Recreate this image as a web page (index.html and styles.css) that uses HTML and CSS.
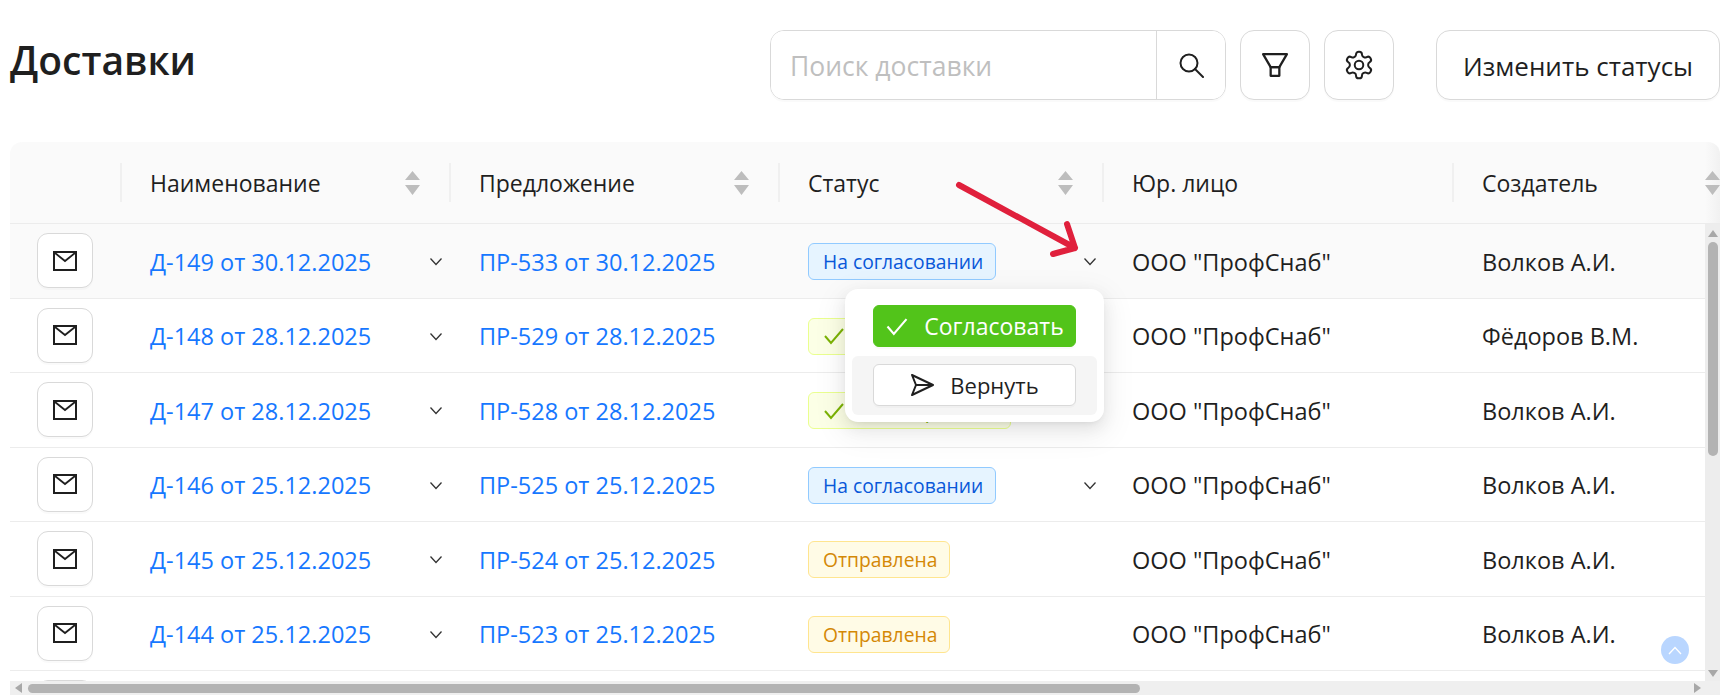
FILE: index.html
```html
<!DOCTYPE html>
<html lang="ru">
  <head>
    <meta charset="UTF-8" />
    <title>Доставки</title>
    <link rel="stylesheet" href="styles.css">
  </head>
  <body>
    <div class="page-head">
      <h1 class="page-title">Доставки</h1>
      <div class="search">
        <input class="search-input" type="text" placeholder="Поиск доставки">
        <button class="search-btn">
          <svg width="26" height="26" viewBox="0 0 26 26" fill="none" stroke="#1f1f1f" stroke-width="2"><circle cx="11" cy="11" r="8.5"/><path d="M17 17l8 8" stroke-linecap="round"/></svg>
        </button>
      </div>
      <button class="icon-btn btn-filter">
        <svg width="26" height="26" viewBox="0 0 24 24" fill="none" stroke="#1f1f1f" stroke-width="2.1" stroke-linejoin="round"><path d="M1 2h22l-7 12H8z"/><path d="M8 14h8v8H8z"/></svg>
      </button>
      <button class="icon-btn btn-settings">
        <svg width="32" height="32" viewBox="0 0 24 24" fill="none" stroke="#1f1f1f" stroke-width="1.5" stroke-linejoin="round"><path d="M12.22 2h-.44a2 2 0 0 0-2 2v.18a2 2 0 0 1-1 1.73l-.43.25a2 2 0 0 1-2 0l-.15-.08a2 2 0 0 0-2.73.73l-.22.38a2 2 0 0 0 .73 2.73l.15.1a2 2 0 0 1 1 1.72v.51a2 2 0 0 1-1 1.74l-.15.09a2 2 0 0 0-.73 2.73l.22.38a2 2 0 0 0 2.73.73l.15-.08a2 2 0 0 1 2 0l.43.25a2 2 0 0 1 1 1.73V20a2 2 0 0 0 2 2h.44a2 2 0 0 0 2-2v-.18a2 2 0 0 1 1-1.73l.43-.25a2 2 0 0 1 2 0l.15.08a2 2 0 0 0 2.73-.73l.22-.39a2 2 0 0 0-.73-2.73l-.15-.08a2 2 0 0 1-1-1.74v-.5a2 2 0 0 1 1-1.74l.15-.09a2 2 0 0 0 .73-2.73l-.22-.38a2 2 0 0 0-2.73-.73l-.15.08a2 2 0 0 1-2 0l-.43-.25a2 2 0 0 1-1-1.73V4a2 2 0 0 0-2-2z"/><circle cx="12" cy="12" r="3.2"/></svg>
      </button>
      <button class="change-btn">Изменить статусы</button>
    </div>

    <div class="table-card">
      <!-- Шапка -->
      <div class="grid-row table-head">
        <div></div>
        <div class="th">Наименование <svg class="sort" width="15" height="24" viewBox="0 0 15 24"><path d="M7.5 0L15 9H0zM7.5 24L0 14h15z"/></svg></div>
        <div class="th">Предложение <svg class="sort" width="15" height="24" viewBox="0 0 15 24"><path d="M7.5 0L15 9H0zM7.5 24L0 14h15z"/></svg></div>
        <div class="th">Статус <svg class="sort" width="15" height="24" viewBox="0 0 15 24"><path d="M7.5 0L15 9H0zM7.5 24L0 14h15z"/></svg></div>
        <div class="th">Юр. лицо</div>
        <div class="th th-last">Создатель <svg class="sort" width="15" height="24" viewBox="0 0 15 24"><path d="M7.5 0L15 9H0zM7.5 24L0 14h15z"/></svg></div>
      </div>

      <div class="table-body">
        <div class="rows">
          <div class="grid-row row row-hover">
            <div class="td-mail"><button class="mail-btn"><svg width="24" height="20" viewBox="0 0 24 20"><path d="M1 1h22v18H1z" fill="#fff" stroke="#1f1f1f" stroke-width="2"/><path d="M2 2l10 8 10-8" fill="none" stroke="#1f1f1f" stroke-width="1.8"/></svg></button></div>
            <div class="td td-name"><a class="link">Д-149 от 30.12.2025</a><svg class="chev" width="14" height="9" viewBox="0 0 14 9"><path d="M1.5 1.5l5.5 6 5.5-6"/></svg></div>
            <div class="td"><a class="link">ПР-533 от 30.12.2025</a></div>
            <div class="td td-status"><span class="pill pill-blue">На согласовании</span><svg class="chev" width="14" height="9" viewBox="0 0 14 9"><path d="M1.5 1.5l5.5 6 5.5-6"/></svg></div>
            <div class="td">ООО "ПрофСнаб"</div>
            <div class="td">Волков А.И.</div>
          </div>
          <div class="grid-row row">
            <div class="td-mail"><button class="mail-btn"><svg width="24" height="20" viewBox="0 0 24 20"><path d="M1 1h22v18H1z" fill="#fff" stroke="#1f1f1f" stroke-width="2"/><path d="M2 2l10 8 10-8" fill="none" stroke="#1f1f1f" stroke-width="1.8"/></svg></button></div>
            <div class="td td-name"><a class="link">Д-148 от 28.12.2025</a><svg class="chev" width="14" height="9" viewBox="0 0 14 9"><path d="M1.5 1.5l5.5 6 5.5-6"/></svg></div>
            <div class="td"><a class="link">ПР-529 от 28.12.2025</a></div>
            <div class="td td-status"><span class="pill pill-green"><svg width="22" height="18" viewBox="0 0 22 18" fill="none" stroke="#7cb305" stroke-width="2"><path d="M2 9l6 7L20 2"/></svg>Подтверждена</span></div>
            <div class="td">ООО "ПрофСнаб"</div>
            <div class="td">Фёдоров В.М.</div>
          </div>
          <div class="grid-row row">
            <div class="td-mail"><button class="mail-btn"><svg width="24" height="20" viewBox="0 0 24 20"><path d="M1 1h22v18H1z" fill="#fff" stroke="#1f1f1f" stroke-width="2"/><path d="M2 2l10 8 10-8" fill="none" stroke="#1f1f1f" stroke-width="1.8"/></svg></button></div>
            <div class="td td-name"><a class="link">Д-147 от 28.12.2025</a><svg class="chev" width="14" height="9" viewBox="0 0 14 9"><path d="M1.5 1.5l5.5 6 5.5-6"/></svg></div>
            <div class="td"><a class="link">ПР-528 от 28.12.2025</a></div>
            <div class="td td-status"><span class="pill pill-green"><svg width="22" height="18" viewBox="0 0 22 18" fill="none" stroke="#7cb305" stroke-width="2"><path d="M2 9l6 7L20 2"/></svg>Подтверждена</span></div>
            <div class="td">ООО "ПрофСнаб"</div>
            <div class="td">Волков А.И.</div>
          </div>
          <div class="grid-row row">
            <div class="td-mail"><button class="mail-btn"><svg width="24" height="20" viewBox="0 0 24 20"><path d="M1 1h22v18H1z" fill="#fff" stroke="#1f1f1f" stroke-width="2"/><path d="M2 2l10 8 10-8" fill="none" stroke="#1f1f1f" stroke-width="1.8"/></svg></button></div>
            <div class="td td-name"><a class="link">Д-146 от 25.12.2025</a><svg class="chev" width="14" height="9" viewBox="0 0 14 9"><path d="M1.5 1.5l5.5 6 5.5-6"/></svg></div>
            <div class="td"><a class="link">ПР-525 от 25.12.2025</a></div>
            <div class="td td-status"><span class="pill pill-blue">На согласовании</span><svg class="chev" width="14" height="9" viewBox="0 0 14 9"><path d="M1.5 1.5l5.5 6 5.5-6"/></svg></div>
            <div class="td">ООО "ПрофСнаб"</div>
            <div class="td">Волков А.И.</div>
          </div>
          <div class="grid-row row">
            <div class="td-mail"><button class="mail-btn"><svg width="24" height="20" viewBox="0 0 24 20"><path d="M1 1h22v18H1z" fill="#fff" stroke="#1f1f1f" stroke-width="2"/><path d="M2 2l10 8 10-8" fill="none" stroke="#1f1f1f" stroke-width="1.8"/></svg></button></div>
            <div class="td td-name"><a class="link">Д-145 от 25.12.2025</a><svg class="chev" width="14" height="9" viewBox="0 0 14 9"><path d="M1.5 1.5l5.5 6 5.5-6"/></svg></div>
            <div class="td"><a class="link">ПР-524 от 25.12.2025</a></div>
            <div class="td td-status"><span class="pill pill-gold">Отправлена</span></div>
            <div class="td">ООО "ПрофСнаб"</div>
            <div class="td">Волков А.И.</div>
          </div>
          <div class="grid-row row">
            <div class="td-mail"><button class="mail-btn"><svg width="24" height="20" viewBox="0 0 24 20"><path d="M1 1h22v18H1z" fill="#fff" stroke="#1f1f1f" stroke-width="2"/><path d="M2 2l10 8 10-8" fill="none" stroke="#1f1f1f" stroke-width="1.8"/></svg></button></div>
            <div class="td td-name"><a class="link">Д-144 от 25.12.2025</a><svg class="chev" width="14" height="9" viewBox="0 0 14 9"><path d="M1.5 1.5l5.5 6 5.5-6"/></svg></div>
            <div class="td"><a class="link">ПР-523 от 25.12.2025</a></div>
            <div class="td td-status"><span class="pill pill-gold">Отправлена</span></div>
            <div class="td">ООО "ПрофСнаб"</div>
            <div class="td">Волков А.И.</div>
          </div>
          <div class="grid-row row">
            <div class="td-mail"><button class="mail-btn"></button></div>
          </div>
        </div>

        <div class="vscroll">
          <i class="tri tri-up"></i>
          <div class="vthumb"></div>
          <i class="tri tri-down"></i>
        </div>
      </div>

      <div class="hscroll">
        <i class="tri tri-left"></i>
        <div class="hthumb"></div>
        <i class="tri tri-right"></i>
      </div>

      <!-- Меню статуса -->
      <div class="status-menu">
        <div class="menu-item">
          <button class="menu-btn menu-btn-ok"><svg width="24" height="19" viewBox="0 0 22 18" fill="none" stroke="#fff" stroke-width="2"><path d="M2 9l6 7L20 2"/></svg>Согласовать</button>
        </div>
        <div class="menu-item menu-item-hover">
          <button class="menu-btn"><svg width="25" height="24" viewBox="0 0 25 24" fill="none" stroke="#1f1f1f" stroke-width="2" stroke-linejoin="round"><path d="M2 2l21 10L2 22l4-10z"/><path d="M6 12h17"/></svg>Вернуть</button>
        </div>
      </div>

      <svg class="red-arrow" width="150" height="100" viewBox="0 0 150 100" fill="none" stroke="#e0203c" stroke-width="6" stroke-linecap="round" stroke-linejoin="round"><path d="M19 15L135 78M127 54l8 24-22 6"/></svg>

      <button class="to-top"><svg width="14" height="9" viewBox="0 0 14 9" fill="none" stroke="#fff" stroke-width="1.3"><path d="M1 8l6-6.5L13 8"/></svg></button>
    </div>
  </body>
</html>
```

FILE: styles.css
```css
* {
  box-sizing: border-box;
}

body {
  margin: 0;
  padding: 30px 5px 0 10px;
  height: 698px;
  overflow: hidden;
  background: white;
  font-family: "Open Sans", "Noto Sans", sans-serif;
  color: #1f1f1f;
}

button {
  font-family: inherit;
  color: inherit;
  cursor: pointer;
}

.page-head {
  display: flex;
  height: 70px;
}

.page-title {
  margin: 0 auto 0 0;
  font-size: 39px;
  line-height: 60px;
  font-weight: 600;
}

.search {
  width: 456px;
  display: flex;
  border: 1px solid #d9d9d9;
  border-radius: 14px;
  box-shadow: 0 2px 0 rgba(0, 0, 0, 0.02);
  margin-right: 14px;
  overflow: hidden;
}

.search-input {
  flex: 1;
  min-width: 0;
  border: none;
  outline: none;
  padding: 2px 19px 0;
  font-family: inherit;
  font-size: 26.5px;
}

.search-input::placeholder {
  color: #bfbfbf;
}

.search-btn {
  width: 69px;
  background: white;
  border: none;
  border-left: 1px solid #d9d9d9;
  display: flex;
  align-items: center;
  justify-content: center;
}

.icon-btn {
  height: 70px;
  background: white;
  border: 1px solid #d9d9d9;
  border-radius: 14px;
  box-shadow: 0 2px 0 rgba(0, 0, 0, 0.02);
  display: flex;
  align-items: center;
  justify-content: center;
  padding: 0;
}

.btn-filter {
  width: 70px;
  margin-right: 14px;
}

.btn-settings {
  width: 70px;
  margin-right: 42px;
}

.change-btn {
  width: 284px;
  height: 70px;
  background: white;
  border: 1px solid #d9d9d9;
  border-radius: 14px;
  box-shadow: 0 2px 0 rgba(0, 0, 0, 0.02);
  font-size: 26px;
  padding: 2px 0 0;
}

.table-card {
  position: relative;
  margin-top: 42px;
  height: 553px;
  border-radius: 12px 12px 0 0;
  overflow: hidden;
}

.grid-row {
  display: grid;
  grid-template-columns: 110px 329px 329px 324px 350px 300px;
  align-items: center;
}

.table-head {
  height: 82px;
  background: linear-gradient(to right, #fafafa calc(100% - 15px), #f1f1f1);
  border-bottom: 1px solid #ececec;
  font-size: 23px;
}

.th {
  height: 39px;
  border-left: 2px solid #f0f0f0;
  padding: 0 29px 0 28px;
  display: flex;
  align-items: center;
  justify-content: space-between;
}

.th-last {
  width: 268px;
  padding-right: 0;
}

.sort {
  fill: #bdbdbd;
  flex: none;
}

.table-body {
  display: flex;
  height: 457px;
}

.rows {
  flex: 1;
  min-width: 0;
  overflow: hidden;
  font-size: 23.5px;
}

.row {
  height: 74.5px;
  border-bottom: 1px solid #ececec;
}

.row-hover {
  background: #fafafa;
}

.td-mail {
  display: flex;
  justify-content: center;
}

.td {
  padding-left: 30px;
  padding-top: 2px;
  white-space: nowrap;
}

.td-name,
.td-status {
  display: flex;
  align-items: center;
  justify-content: space-between;
  padding-right: 6px;
}

.td-status {
  padding-right: 5px;
}

.link {
  color: #1677ff;
}

.chev {
  fill: none;
  stroke: #333;
  stroke-width: 1.3;
  flex: none;
}

.mail-btn {
  width: 56px;
  height: 55px;
  background: white;
  border: 1px solid #d9d9d9;
  border-radius: 11px;
  box-shadow: 0 2px 0 rgba(0, 0, 0, 0.02);
  display: flex;
  align-items: center;
  justify-content: center;
  padding: 0;
}

.pill {
  height: 37px;
  display: inline-flex;
  align-items: center;
  gap: 12px;
  padding: 0 12px 0 14px;
  border: 1px solid;
  border-radius: 6px;
  font-size: 19.3px;
}

.pill-blue {
  background: #e6f4ff;
  border-color: #91caff;
  color: #0958d9;
}

.pill-green {
  width: 203px;
  background: #fcffe6;
  border-color: #eaff8f;
  color: #7cb305;
}

.pill-gold {
  background: #fffbe6;
  border-color: #ffe58f;
  color: #d48806;
}

/* скроллбары */
.vscroll {
  width: 15px;
  background: #ededed;
  display: flex;
  flex-direction: column;
  align-items: center;
  padding: 6px 0 4px;
}

.vthumb {
  width: 10px;
  height: 214px;
  margin: 5px 0 auto;
  background: #b3b3b3;
  border-radius: 5px;
}

.hscroll {
  height: 14px;
  background: #efefef;
  display: flex;
  align-items: center;
  padding: 0 19px 0 5px;
}

.hthumb {
  width: 1112px;
  height: 9px;
  margin: 0 auto 0 6px;
  background: #b3b3b3;
  border-radius: 5px;
}

.tri {
  display: block;
  width: 0;
  height: 0;
  border: 0 solid transparent;
}

.tri-up {
  border-width: 0 5px 7px;
  border-bottom-color: #a8a8a8;
}

.tri-down {
  border-width: 7px 5px 0;
  border-top-color: #a8a8a8;
}

.tri-left {
  border-width: 5px 7px 5px 0;
  border-right-color: #a8a8a8;
}

.tri-right {
  border-width: 5px 0 5px 7px;
  border-left-color: #a8a8a8;
}

/* меню статуса */
.status-menu {
  position: absolute;
  left: 835px;
  top: 147px;
  width: 259px;
  height: 133px;
  padding: 16px 7px 7px;
  background: white;
  border-radius: 13px;
  box-shadow: 0 6px 16px rgba(0, 0, 0, 0.08), 0 3px 6px -4px rgba(0, 0, 0, 0.12), 0 9px 28px 8px rgba(0, 0, 0, 0.05);
  display: flex;
  flex-direction: column;
  gap: 9px;
}

.menu-item {
  padding: 0 21px;
}

.menu-item-hover {
  background: #f5f5f5;
  border-radius: 6px;
  padding-top: 8px;
  padding-bottom: 9px;
}

.menu-btn {
  width: 100%;
  height: 42px;
  background: white;
  border: 1px solid #d9d9d9;
  border-radius: 6px;
  box-shadow: 0 2px 0 rgba(0, 0, 0, 0.02);
  font-size: 22px;
  display: flex;
  align-items: center;
  justify-content: center;
  gap: 15px;
  padding: 0;
}

.menu-btn-ok {
  background: #52c41a;
  border-color: #52c41a;
  color: white;
  font-size: 23px;
  gap: 15px;
}

.red-arrow {
  position: absolute;
  left: 930px;
  top: 28px;
}

.to-top {
  position: absolute;
  right: 31px;
  top: 494px;
  width: 28px;
  height: 28px;
  border: none;
  border-radius: 50%;
  background: #b9d6ff;
  display: flex;
  align-items: center;
  justify-content: center;
  padding: 0;
}
```
